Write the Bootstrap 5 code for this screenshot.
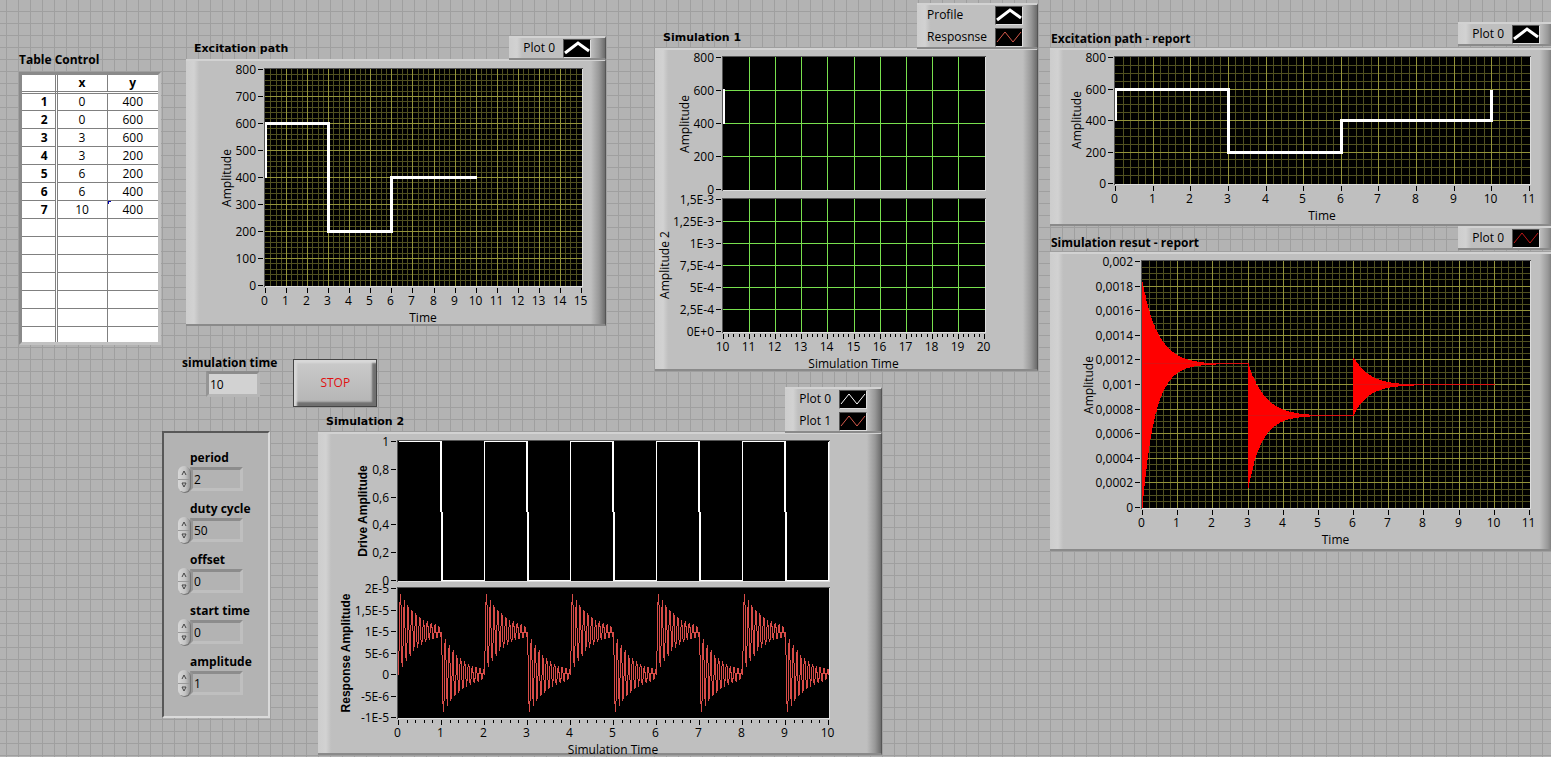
<!DOCTYPE html>
<html lang="en">
<head>
<meta charset="utf-8">
<meta name="viewport" content="width=device-width, initial-scale=1">
<title>Simulation front panel</title>
<link href="https://cdn.jsdelivr.net/npm/bootstrap@5.3.0/dist/css/bootstrap.min.css" rel="stylesheet">
<style>
  body {
    font: 12px/16px "Open Sans", "Noto Sans", sans-serif;
    color: #000;
    background-color: #b3b3b3;
    background-image:
      linear-gradient(90deg, #9f9f9f 1px, transparent 1px),
      linear-gradient(#9f9f9f 1px, transparent 1px);
    background-size: 12px 12px;
    background-position: 6px 11px;
    overflow-x: hidden;
  }
  /* front panel: columns follow the window */
  .front-panel {
    display: grid;
    grid-template-columns: 163fr 23fr 132fr 288fr 49fr 227fr 156fr 12fr 501fr;
    grid-template-rows: 355px 32px auto;
    align-items: start;
    min-height: 100vh;
  }
  .front-panel > * { min-width: 0; }
  .area-table  { grid-area: 1 / 1 / 3 / 2; padding: 52px 2px 0 19px; }
  .area-path   { grid-area: 1 / 3 / 2 / 5; padding-top: 36px; }
  .area-sim1   { grid-area: 1 / 6 / 3 / 8; padding-top: 3px; }
  .area-run    { grid-area: 2 / 2 / 4 / 5; padding-left: 19px; }
  .area-params { grid-area: 3 / 2 / 4 / 4; padding-top: 44px; }
  .area-sim2   { grid-area: 3 / 4 / 4 / 7; }
  .area-report { grid-area: 1 / 9 / 4 / 10; padding-top: 22px; margin-right: -4px; }

  .caption { font: 700 12px/16px "Open Sans", "Noto Sans", sans-serif; margin: 0; white-space: nowrap; }
  .caption-wide { font-family: "DejaVu Sans", sans-serif; font-size: 11px; }

  .bezel {
    border-top: 2px solid #d2d2d2;
    border-bottom: 2px solid #8a8a8a;
    border-right: 1px solid #555;
    background:
      linear-gradient(270deg, #6c6c6c, #989898 6px, #bebebe 14px, transparent 15px),
      linear-gradient(90deg, #cdcdcd, #d2d2d2 8px, #c0c0c0 13px, #bfbfbf 14px);
  }
  .plot-body svg { display: block; width: 100%; overflow: visible; }
  .plot-head { position: relative; z-index: 1; }
  .plot-head .caption { padding: 0 0 2px 8px; }
  .report .plot-head .caption { padding: 0 0 1px 1px; }
  .report .key-box { margin-bottom: 2px; }
  .key-box { padding: 0 14px; margin-bottom: -1px; }
  .area-sim1 .key-box { padding-left: 10px; }
  .key-row { height: 20px; }
  .key-row + .key-row { margin-top: 2px; }
  .swatch { display: block; width: 28px; height: 19px; background: #000; border: 1px solid #555; border-right-color: #ddd; border-bottom-color: #ddd; }

  .grid-table { width: 100%; border: 3px solid; border-color: #8a8a8a #c2c2c2 #c2c2c2 #8a8a8a; background: #fff; }
  .grid-table table { width: 100%; table-layout: fixed; border-collapse: collapse; }
  .grid-table th, .grid-table td { height: 18px; padding: 0; line-height: 16px; text-align: center; border-bottom: 1px solid #808080; border-left: 1px solid #808080; }
  .grid-table thead th { height: 17px; border-bottom: 3px double #808080; }
  .grid-table tbody th { text-align: right; padding-right: 7px; }
  .grid-table tr > :first-child { border-left: 0; border-right: 3px double #808080; }
  .grid-table tbody tr:last-child > * { border-bottom: 0; height: 15px; }
  .grid-table .picked { background: linear-gradient(#0000b0, #0000b0) 0 0 / 3px 1px no-repeat, linear-gradient(#0000b0, #0000b0) 0 0 / 1px 3px no-repeat; }

  .numeric {
    font: inherit; width: 53px; height: 24px; padding: 0 0 0 1px; border-radius: 0;
    border: 3px solid; border-color: #8c8c8c #bfbfbf #bfbfbf #959595;
    background: #b3b3b3; color: #000;
  }
  .numeric-read { background: #d2d2d2; width: 54px; height: 26px; border-bottom-color: #b6b6b6; border-right-color: #b6b6b6; }
  .cluster { width: 108px; margin-left: -1px; padding: 17px 0 11px 14px; background: #b3b3b3; border: 2px solid; border-color: #585858 #dadada #dadada #585858; }
  .cluster label { padding-left: 12px; }
  .param { height: 51px; }
  .spin { width: 12px; height: 26px; filter: drop-shadow(1px 1px 0 #777); }
  .spin button { display: block; flex: 1; padding: 0; border: 0; background: linear-gradient(90deg, #d8d8d8, #c4c4c4 60%, #979797); border-radius: 6px 6px 0 0; line-height: 0; }
  .spin button + button { border-radius: 0 0 6px 6px; border-top: 1px solid #999; }
  .stop-btn {
    width: 84px; height: 48px; border: 1px solid #444; color: #e01010; padding: 0; font-size: 12px;
    background: linear-gradient(#cbcbcb, #b4b4b4);
    box-shadow: inset 3px 3px 2px #d8d8d8, inset -4px -4px 2px #707070;
  }
  .tick-text { font: 12px "Open Sans", "Noto Sans", sans-serif; }
  .tick-text text { fill: #000; }
  .bold-axis { font-weight: 700; font-family: "Liberation Sans", sans-serif; }
</style>
</head>
<body>
<main class="front-panel">

  <section class="area-table">
    <h2 class="caption mb-1">Table Control</h2>
    <div class="grid-table">
      <table aria-label="Table Control">
        <colgroup><col style="width:34px"><col><col></colgroup>
        <thead><tr><th></th><th>x</th><th>y</th></tr></thead>
        <tbody>
          <tr><th>1</th><td>0</td><td>400</td></tr>
          <tr><th>2</th><td>0</td><td>600</td></tr>
          <tr><th>3</th><td>3</td><td>600</td></tr>
          <tr><th>4</th><td>3</td><td>200</td></tr>
          <tr><th>5</th><td>6</td><td>200</td></tr>
          <tr><th>6</th><td>6</td><td>400</td></tr>
          <tr><th>7</th><td>10</td><td class="picked">400</td></tr>
          <tr><th></th><td></td><td></td></tr>
          <tr><th></th><td></td><td></td></tr>
          <tr><th></th><td></td><td></td></tr>
          <tr><th></th><td></td><td></td></tr>
          <tr><th></th><td></td><td></td></tr>
          <tr><th></th><td></td><td></td></tr>
          <tr><th></th><td></td><td></td></tr>
        </tbody>
      </table>
    </div>
  </section>

  <section class="area-path">
    <div class="plot-head d-flex justify-content-between align-items-end">
      <h2 class="caption caption-wide">Excitation path</h2>
      <div class="key-box bezel">
        <div class="key-row d-flex align-items-center gap-2"><span>Plot 0</span><svg class="swatch" viewBox="0 0 26 17"><path d="M1 13 14 3 25 11" fill="none" stroke="#fff" stroke-width="3"/></svg></div>
      </div>
    </div>
    <div class="plot-body bezel" data-plot="path"></div>
  </section>

  <section class="area-sim1">
    <div class="plot-head d-flex justify-content-between align-items-end">
      <h2 class="caption caption-wide">Simulation 1</h2>
      <div class="key-box bezel">
        <div class="key-row d-flex align-items-center justify-content-between gap-2"><span>Profile</span><svg class="swatch" viewBox="0 0 26 17"><path d="M1 13 14 3 25 11" fill="none" stroke="#fff" stroke-width="3"/></svg></div>
        <div class="key-row d-flex align-items-center justify-content-between gap-2"><span>Resposnse</span><svg class="swatch" viewBox="0 0 26 17"><path d="M1 13 9 3 17 13 25 3" fill="none" stroke="#d65a4c"/></svg></div>
      </div>
    </div>
    <div class="plot-body bezel" data-plot="sim1"></div>
  </section>

  <section class="area-run d-flex">
    <div>
      <label class="caption d-block" for="simtime">simulation time</label>
      <input class="numeric numeric-read ms-4" id="simtime" value="10" readonly>
    </div>
    <button type="button" class="stop-btn ms-3 mt-1">STOP</button>
  </section>

  <section class="area-params">
    <div class="cluster">
      <div class="param" data-name="period" data-value="2"></div>
      <div class="param" data-name="duty cycle" data-value="50"></div>
      <div class="param" data-name="offset" data-value="0"></div>
      <div class="param" data-name="start time" data-value="0"></div>
      <div class="param" data-name="amplitude" data-value="1"></div>
    </div>
  </section>

  <section class="area-sim2">
    <div class="plot-head d-flex justify-content-between align-items-end">
      <h2 class="caption caption-wide">Simulation 2</h2>
      <div class="key-box bezel">
        <div class="key-row d-flex align-items-center gap-2"><span>Plot 0</span><svg class="swatch" viewBox="0 0 26 17"><path d="M1 13 9 3 17 13 25 3" fill="none" stroke="#fff"/></svg></div>
        <div class="key-row d-flex align-items-center gap-2"><span>Plot 1</span><svg class="swatch" viewBox="0 0 26 17"><path d="M1 13 9 3 17 13 25 3" fill="none" stroke="#d65a4c"/></svg></div>
      </div>
    </div>
    <div class="plot-body bezel" data-plot="sim2"></div>
  </section>

  <div class="area-report">
    <section class="report">
      <div class="plot-head d-flex justify-content-between align-items-end">
        <h2 class="caption">Excitation path - report</h2>
        <div class="key-box bezel">
          <div class="key-row d-flex align-items-center gap-2"><span>Plot 0</span><svg class="swatch" viewBox="0 0 26 17"><path d="M1 13 14 3 25 11" fill="none" stroke="#fff" stroke-width="3"/></svg></div>
        </div>
      </div>
      <div class="plot-body bezel" data-plot="rep1"></div>
    </section>
    <section class="report">
      <div class="plot-head d-flex justify-content-between align-items-end">
        <h2 class="caption">Simulation resut - report</h2>
        <div class="key-box bezel">
          <div class="key-row d-flex align-items-center gap-2"><span>Plot 0</span><svg class="swatch" viewBox="0 0 26 17"><path d="M1 13 9 3 17 13 25 3" fill="none" stroke="#c01818"/></svg></div>
        </div>
      </div>
      <div class="plot-body bezel" data-plot="rep2"></div>
    </section>
  </div>
</main>

<script src="https://cdn.jsdelivr.net/npm/bootstrap@5.3.0/dist/js/bootstrap.bundle.min.js"></script>
<script>
// numeric controls of the drive signal
document.querySelectorAll('.param').forEach(function (box) {
  var id = box.dataset.name.replace(' ', '-');
  box.innerHTML =
    '<label class="caption d-block" for="' + id + '">' + box.dataset.name + '</label>' +
    '<div class="d-flex align-items-center">' +
      '<div class="spin d-flex flex-column">' +
        '<button type="button" aria-label="increase"><svg width="12" height="12"><path d="M4 9 6 5 8 9" fill="none" stroke="#444"/></svg></button>' +
        '<button type="button" aria-label="decrease"><svg width="12" height="12"><path d="M4 3h4L6 7z" fill="#ccc" stroke="#444"/></svg></button>' +
      '</div><input class="numeric" id="' + id + '" value="' + box.dataset.value + '">' +
    '</div>';
});

var MAJOR = '#93933a', MINOR = '#505020', GREEN = '#78e04e';

function decay(segments) {
  // [start, end, centre, upper amplitude, lower amplitude, upper rate, lower rate]
  return function (X, Y) {
    var s = '';
    segments.forEach(function (g) {
      var a = X(g[0]), b = X(g[1]), top = [], low = [], y = Y(g[2]);
      for (var x = a; x <= b; x++) {
        var t = (x - a) / (b - a) * (g[1] - g[0]);
        if (t > 2.1) break;
        top.push(x + ',' + Y(g[2] + g[3] * Math.exp(-g[5] * t)));
        low.unshift(x + ',' + Y(g[2] - g[4] * Math.exp(-g[6] * t)));
      }
      s += '<polygon points="' + top.concat(low).join(' ') + '" fill="#f00"/>';
      s += '<rect x="' + (a - .5) + '" y="' + (y - .5) + '" width="' + (b - a + 1) + '" height="1" fill="#e01010"/>';
      s += '<path fill="none" d="M' + a + ' ' + Y(g[2] + g[3]) + 'V' + Y(g[2] - g[4]) + '" stroke="#f00"/>';
    });
    return s;
  };
}
function steps(points) {
  return function (X, Y) {
    return '<polyline fill="none" stroke="#fff" stroke-width="3" points="' +
      points.map(function (p) { return X(p[0]) + ',' + Y(p[1]); }).join(' ') + '"/>';
  };
}
function drive(X, Y) {
  var d = 'M' + X(0) + ' ' + Y(1), w = '';
  for (var k = 0; k < 10; k += 2) {
    var x = X(k + 1);
    d += 'H' + x + 'V' + Y(0) + 'H' + X(k + 2) + 'V' + Y(1);
    w += 'M' + (x - 1) + ' ' + Y(1) + 'V' + Y(.5) + 'M' + (x + 1) + ' ' + Y(.5) + 'V' + Y(0);
  }
  return '<path fill="none" stroke="#fff" d="' + d + w + '"/>';
}
function response(X, Y) {
  var p = [];
  for (var n = 0; n <= 1000; n++) {
    var t = n / 100, k = Math.floor(t), u = t - k;
    var v = Math.exp(-2.2 * u) * Math.cos(2 * Math.PI * u / .0895) * 1e-5;
    p.push(X(t) + ',' + Y(k % 2 ? v : 1e-5 - v));
  }
  return '<polyline fill="none" stroke="#d84c48" points="' + p.join(' ') + '"/>';
}

var PLOTS = {
  path: { h: 263, left: 79, right: 24, x: [0, 15, 1], xName: 'Time', xSub: 4, panes: [
    { top: 8, h: 216, y: [0, 800, 100], ySub: 5, name: 'Amplitude', nameX: 41, nameY: 117, draw: steps([[0, 400], [0, 600], [3, 600], [3, 200], [6, 200], [6, 400], [10, 400]]) }] },
  sim1: { h: 319, left: 68, right: 53, x: [10, 20, 1], xName: 'Simulation Time', tickSub: true, grid: GREEN, panes: [
    { top: 7, h: 132, y: [0, 800, 200], name: 'Amplitude', nameX: 30, nameY: 74, draw: steps([[10, 400], [10, 610]]) },
    { top: 149, h: 132, y: [0, 6, 1], labels: ['0E+0', '2,5E-4', '5E-4', '7,5E-4', '1E-3', '1,25E-3', '1,5E-3'], name: 'Amplitude 2', nameX: 10, nameY: 215 }] },
  sim2: { h: 319, left: 80, right: 53, x: [0, 10, 1], xName: 'Simulation Time', tickSub: true, grid: 'none', panes: [
    { top: 7, h: 139, y: [0, 1, .2], name: 'Drive Amplitude', bold: true, nameX: 45, nameY: 77, draw: drive },
    { top: 154, h: 129, y: [-1e-5, 2e-5, 5e-6], labels: ['-1E-5', '-5E-6', '0', '5E-6', '1E-5', '1,5E-5', '2E-5'], name: 'Response Amplitude', bold: true, nameX: 28, nameY: 219, draw: response }] },
  rep1: { h: 174, left: 65, right: 25, x: [0, 11, 1], xName: 'Time', xSub: 5, panes: [
    { top: 7, h: 126, y: [0, 800, 200], ySub: 4, name: 'Amplitude', nameX: 27, nameY: 70, draw: steps([[0, 400], [0, 600], [3, 600], [3, 200], [6, 200], [6, 400], [10, 400], [10, 600]]) }] },
  rep2: { h: 295, left: 92, right: 25, x: [0, 11, 1], xName: 'Time', xSub: 5, panes: [
    { top: 7, h: 246, y: [0, .002, .0002], ySub: 4, name: 'Amplitude', nameX: 39, nameY: 131, draw: decay([
      [0, 3, .00117, .00067, .00117, 2.3, 2.8], [3, 6, .00075, .00042, .00059, 2.2, 2.6], [6, 10, .001, .00022, .00025, 2.3, 2.4]]) }] }
};

function render(host) {
  var c = PLOTS[host.dataset.plot], W = host.clientWidth, s = '';
  var x0 = c.left, x1 = W - c.right, xr = c.x, nx = Math.round((xr[1] - xr[0]) / xr[2]);
  function X(v) { return Math.round(x0 + (v - xr[0]) / (xr[1] - xr[0]) * (x1 - x0)) + .5; }
  var last;
  c.panes.forEach(function (p, pi) {
    var b = p.top + p.h, yr = p.y, ny = Math.round((yr[1] - yr[0]) / yr[2]);
    function Y(v) { return Math.round(b - (v - yr[0]) / (yr[1] - yr[0]) * p.h) + .5; }
    s += '<rect x="' + (x0 - 1) + '" y="' + (p.top - 1) + '" width="' + (x1 - x0 + 3) + '" height="' + (p.h + 3) + '" fill="#dedede"/>' +
         '<path d="M' + (x0 - .5) + ' ' + (b + 1.5) + 'V' + (p.top - .5) + 'H' + (x1 + 1.5) + '" fill="none" stroke="#555"/>' +
         '<rect x="' + x0 + '" y="' + p.top + '" width="' + (x1 - x0 + 1) + '" height="' + (p.h + 1) + '" fill="#000"/>';
    var minor = '', major = '', i;
    if (c.xSub) for (i = 1; i < nx * c.xSub; i++) minor += 'M' + X(xr[0] + i * xr[2] / c.xSub) + ' ' + p.top + 'V' + (b + 1);
    if (p.ySub) for (i = 1; i < ny * p.ySub; i++) minor += 'M' + x0 + ' ' + Y(yr[0] + i * yr[2] / p.ySub) + 'H' + (x1 + 1);
    for (i = 1; i < nx; i++) major += 'M' + X(xr[0] + i * xr[2]) + ' ' + p.top + 'V' + (b + 1);
    for (i = 1; i < ny; i++) major += 'M' + x0 + ' ' + Y(yr[0] + i * yr[2]) + 'H' + (x1 + 1);
    s += '<path d="' + minor + '" stroke="' + MINOR + '"/><path d="' + major + '" stroke="' + (c.grid || MAJOR) + '"/>';
    var clip = host.dataset.plot + pi;
    s += '<clipPath id="' + clip + '"><rect x="' + x0 + '" y="' + p.top + '" width="' + (x1 - x0 + 1) + '" height="' + (p.h + 1) + '"/></clipPath>';
    if (p.draw) s += '<g clip-path="url(#' + clip + ')">' + p.draw(X, Y) + '</g>';
    for (i = 0; i <= ny; i++) {
      var v = yr[0] + i * yr[2], y = Y(v);
      var label = p.labels ? p.labels[i] : String(+v.toFixed(4)).replace('.', ',');
      s += '<path d="M' + (x0 - 7) + ' ' + y + 'h5" stroke="#000"/><text text-anchor="end" x="' + (x0 - 9) + '" y="' + (y + 4) + '">' + label + '</text>';
    }
    s += '<text text-anchor="middle"' + (p.bold ? ' class="bold-axis"' : '') + ' transform="translate(' + (p.nameX + 4) + ' ' + p.nameY + ') rotate(-90)">' + p.name + '</text>';
    last = b;
  });
  var subs = c.tickSub ? 5 : 1;
  for (var i = 0; i <= nx * subs; i++) {
    var x = X(xr[0] + i * xr[2] / subs);
    s += '<path d="M' + x + ' ' + (last + 3) + 'v' + (i % subs ? 3 : 5) + '" stroke="#000"/>';
    if (i % subs === 0) s += '<text text-anchor="middle" x="' + (x - 1) + '" y="' + (last + 20) + '">' + (xr[0] + i / subs) + '</text>';
  }
  s += '<text text-anchor="middle" x="' + ((x0 + x1) / 2) + '" y="' + (last + 37) + '">' + c.xName + '</text>';
  host.innerHTML = '<svg class="tick-text" role="img" aria-label="' + c.panes[0].name + ' over ' + c.xName + '" height="' + c.h + '" shape-rendering="crispEdges">' + s + '</svg>';
}
function renderAll() { document.querySelectorAll('[data-plot]').forEach(render); }
window.addEventListener('resize', renderAll);
renderAll();
</script>
</body>
</html>
